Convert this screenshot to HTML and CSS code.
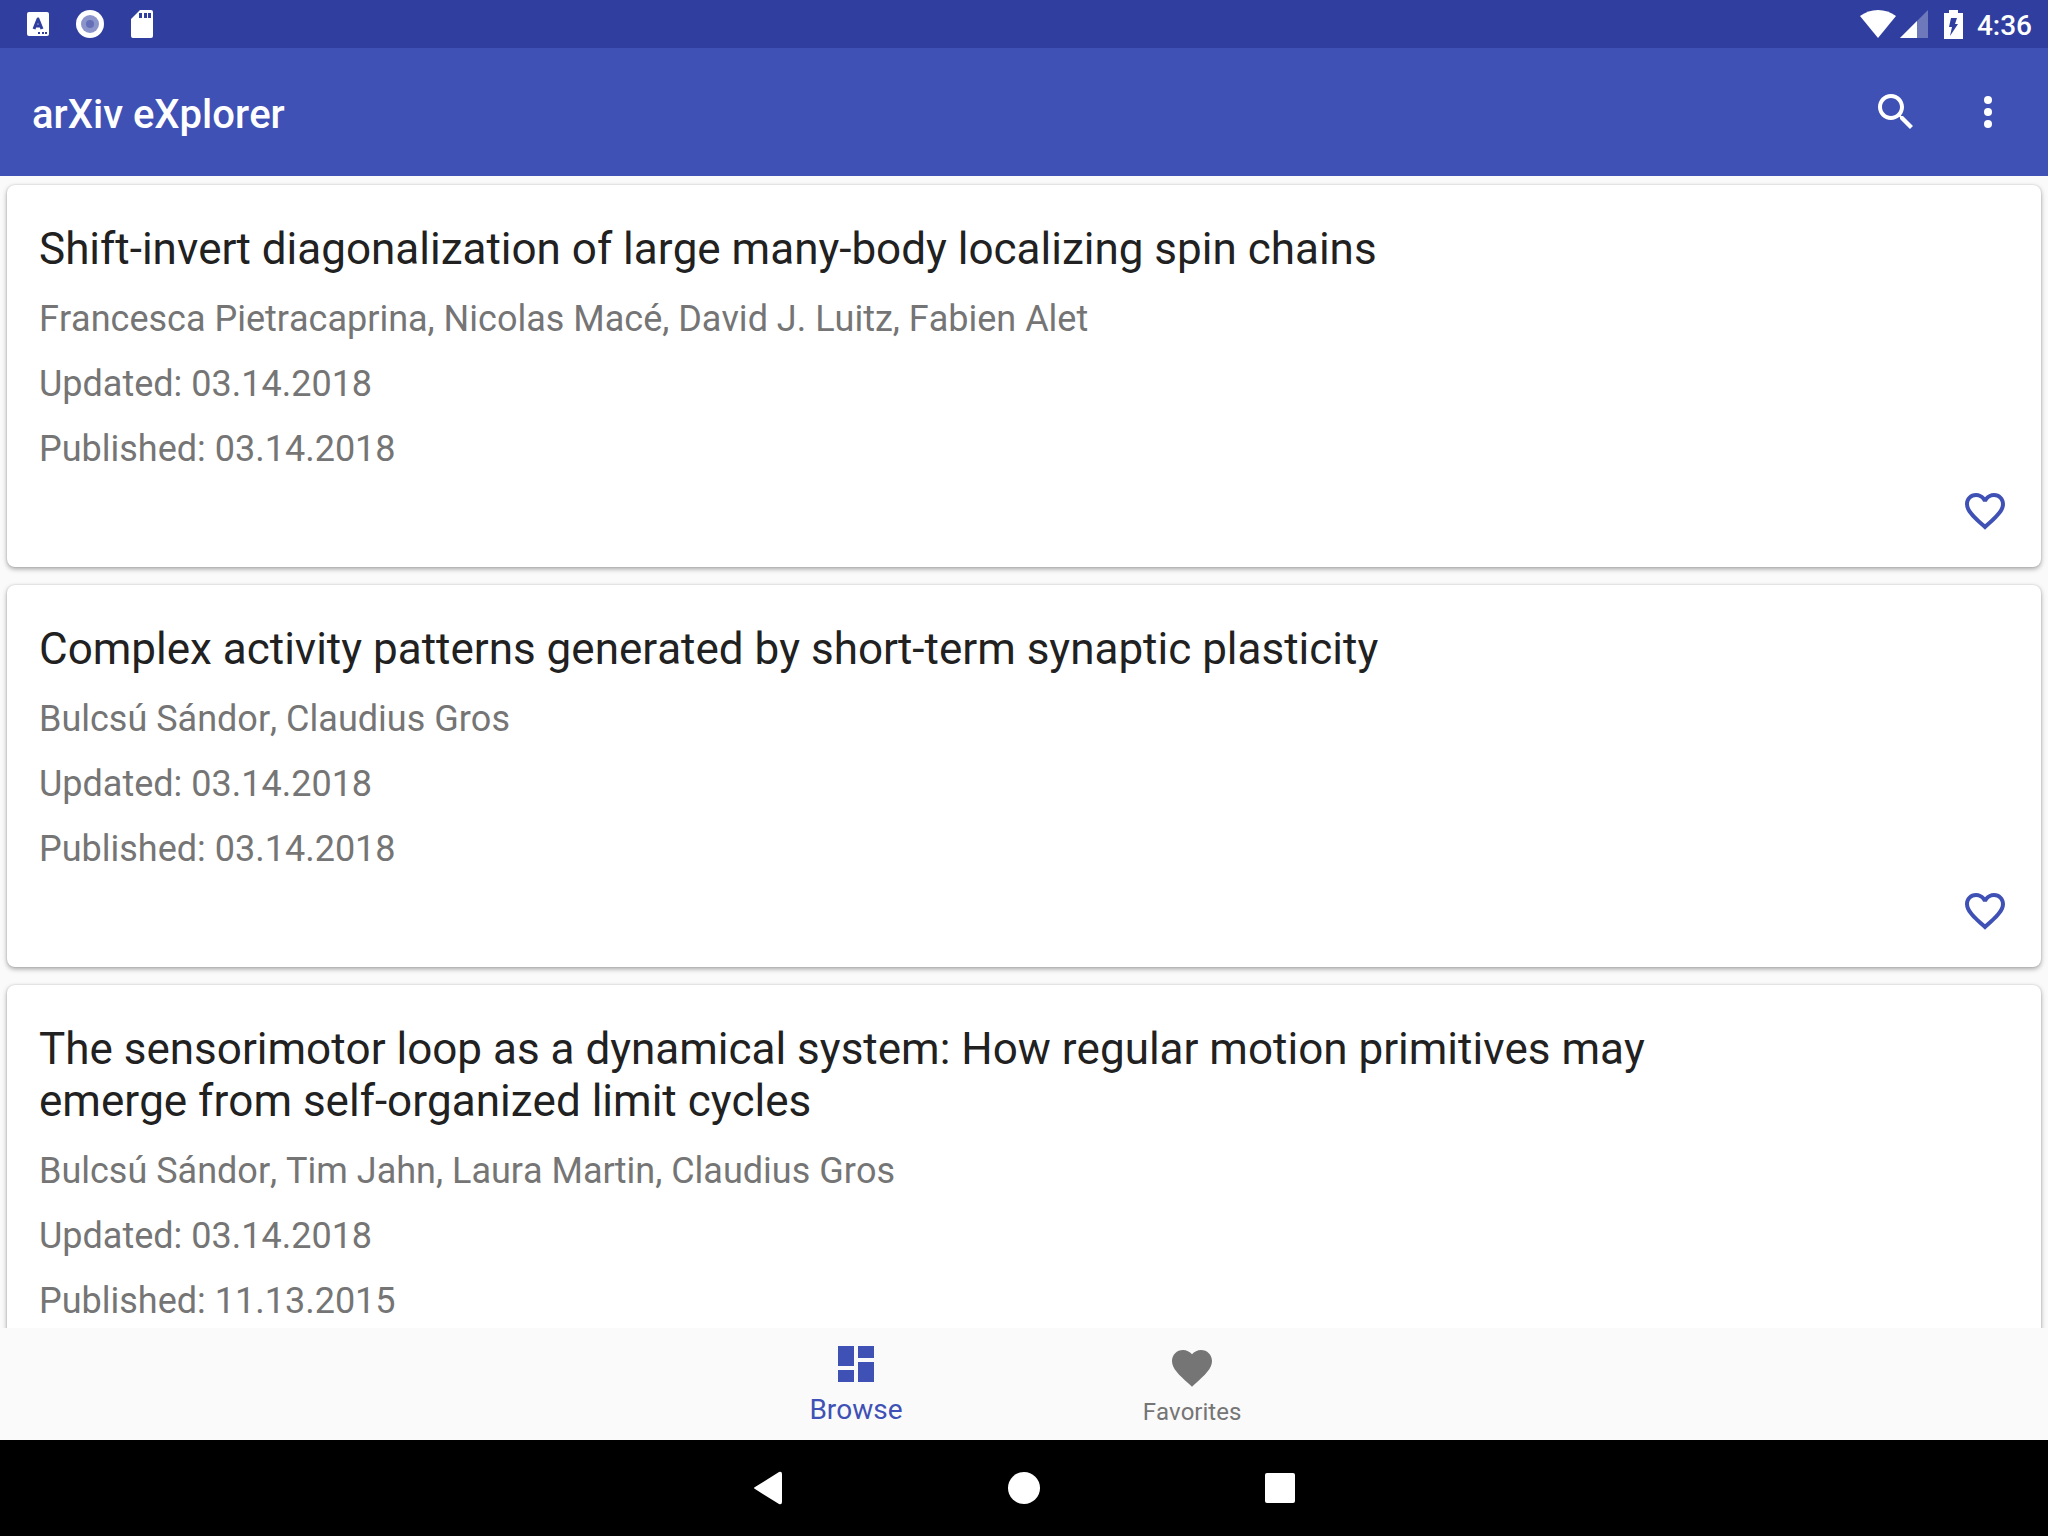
FILE: index.html
```html
<!DOCTYPE html>
<html lang="en">
<head>
<meta charset="utf-8">
<meta name="viewport" content="width=device-width, initial-scale=1">
<title>arXiv eXplorer</title>
<link rel="stylesheet" href="styles.css">
</head>
<body>
<div class="status-bar">
  <div class="notifications">
    <svg class="status-icon" viewBox="0 0 48 48" aria-hidden="true"><path fill="#fff" d="M15 12h18q2 0 2 2v20q0 2-2 2H15q-2 0-2-2V14q0-2 2-2z"/><path fill="none" stroke="#303f9f" stroke-width="3" stroke-linejoin="round" d="M20 29l4-10 4 10M21 26h6"/><path fill="#303f9f" d="M24 32h2v2h-2zM28 32h2v2h-2zM31 32h2v2h-2z"/></svg>
    <svg class="status-icon" viewBox="0 0 48 48" aria-hidden="true"><circle cx="24" cy="24" r="14" fill="#fff"/><circle cx="24" cy="24" r="9" fill="#8b94cb"/><circle cx="24" cy="24" r="4" fill="#646fb8"/></svg>
    <svg class="status-icon" viewBox="0 0 48 48" aria-hidden="true"><path fill="#fff" fill-rule="evenodd" d="M22 10h11q2 0 2 2v24q0 2-2 2H15q-2 0-2-2V19zM21 13v5h3v-5zM26 13v5h3v-5zM30 13v5h3v-5z"/></svg>
  </div>
  <div class="system">
    <svg class="wifi" viewBox="0 0 36 28" aria-hidden="true"><path fill="#fff" d="M18 28L0 6Q8 0 18 0T36 6z"/></svg>
    <svg class="signal" viewBox="0 0 28 28" aria-hidden="true"><path fill="#fff" fill-opacity=".3" d="M28 0v28H0z"/><path fill="#fff" d="M17 11v17H0z"/></svg>
    <svg class="battery" viewBox="0 0 20 29" aria-hidden="true"><path fill="#fff" fill-rule="evenodd" d="M5 0h9v3h5v26H0V3h5zM13 8H7L5 17h3L6 26l8-12h-3z"/></svg>
    <time class="clock">4:36</time>
  </div>
</div>

<header class="toolbar">
  <h1 class="app-title">arXiv eXplorer</h1>
  <button class="icon-button" type="button" aria-label="Search"><svg class="icon" viewBox="0 0 24 24"><path d="M15.500 14h-.79l-.28-.27C15.410 12.590 16 11.110 16 9.500 16 5.910 13.090 3 9.500 3S3 5.910 3 9.500 5.910 16 9.500 16c1.610 0 3.090-.59 4.230-1.570l.27.28v.79l5 4.990L20.490 19l-4.990-5zm-6 0C7.010 14 5 11.990 5 9.500S7.010 5 9.500 5 14 7.010 14 9.500 11.990 14 9.500 14z"/></svg></button>
  <button class="icon-button" type="button" aria-label="More options"><svg class="icon" viewBox="0 0 24 24"><circle cx="12" cy="6" r="2"/><circle cx="12" cy="12" r="2"/><circle cx="12" cy="18" r="2"/></svg></button>
</header>

<main class="papers">
  <article class="card">
    <h2 class="paper-title">Shift-invert diagonalization of large many-body localizing spin chains</h2>
    <p class="meta">Francesca Pietracaprina, Nicolas Macé, David J. Luitz, Fabien Alet</p>
    <p class="meta">Updated: 03.14.2018</p>
    <p class="meta">Published: 03.14.2018</p>
    <button class="favorite" type="button" aria-label="Add to favorites"><svg class="icon" viewBox="0 0 24 24"><path d="M16.500 3c-1.740 0-3.410.81-4.500 2.090C10.910 3.810 9.240 3 7.500 3 4.420 3 2 5.420 2 8.500c0 3.780 3.400 6.860 8.550 11.540L12 21.350l1.450-1.320C18.600 15.360 22 12.280 22 8.500 22 5.420 19.580 3 16.500 3zm-4.400 15.550l-.1.1-.1-.1C7.140 14.240 4 11.390 4 8.500 4 6.500 5.500 5 7.500 5c1.540 0 3.040.99 3.570 2.360h1.870C13.460 5.990 14.960 5 16.500 5c2 0 3.500 1.500 3.500 3.500 0 2.890-3.140 5.740-7.900 10.050z"/></svg></button>
  </article>
  <article class="card">
    <h2 class="paper-title">Complex activity patterns generated by short-term synaptic plasticity</h2>
    <p class="meta">Bulcsú Sándor, Claudius Gros</p>
    <p class="meta">Updated: 03.14.2018</p>
    <p class="meta">Published: 03.14.2018</p>
    <button class="favorite" type="button" aria-label="Add to favorites"><svg class="icon" viewBox="0 0 24 24"><path d="M16.500 3c-1.740 0-3.410.81-4.500 2.090C10.910 3.810 9.240 3 7.500 3 4.420 3 2 5.420 2 8.500c0 3.780 3.400 6.860 8.550 11.540L12 21.350l1.450-1.320C18.600 15.360 22 12.280 22 8.500 22 5.420 19.580 3 16.500 3zm-4.400 15.550l-.1.1-.1-.1C7.140 14.240 4 11.390 4 8.500 4 6.500 5.500 5 7.500 5c1.540 0 3.040.99 3.570 2.360h1.870C13.460 5.990 14.960 5 16.500 5c2 0 3.500 1.500 3.500 3.500 0 2.890-3.140 5.740-7.900 10.050z"/></svg></button>
  </article>
  <article class="card">
    <h2 class="paper-title">The sensorimotor loop as a dynamical system: How regular motion primitives may emerge from self-organized limit cycles</h2>
    <p class="meta">Bulcsú Sándor, Tim Jahn, Laura Martin, Claudius Gros</p>
    <p class="meta">Updated: 03.14.2018</p>
    <p class="meta">Published: 11.13.2015</p>
  </article>
</main>

<nav class="tabs" aria-label="Sections">
  <a class="tab tab-active" href="#browse" aria-current="page"><svg class="icon" viewBox="0 0 24 24" aria-hidden="true"><path d="M3 13h8V3H3v10zm0 8h8v-6H3v6zm10 0h8V11h-8v10zm0-18v6h8V3h-8z"/></svg><span>Browse</span></a>
  <a class="tab" href="#favorites"><svg class="icon" viewBox="0 0 24 24" aria-hidden="true"><path d="M12 21.350l-1.450-1.320C5.400 15.360 2 12.280 2 8.500 2 5.420 4.420 3 7.500 3c1.740 0 3.410.81 4.500 2.090C13.090 3.810 14.760 3 16.500 3 19.580 3 22 5.420 22 8.500c0 3.780-3.400 6.860-8.550 11.540L12 21.350z"/></svg><span>Favorites</span></a>
</nav>

<div class="system-nav">
  <button class="system-button" type="button" aria-label="Back"><svg class="icon" viewBox="0 0 48 48"><path d="M38 10v28q0 3-3 2L11 25q-2-1 0-2L35 8q3-1 3 2z"/></svg></button>
  <button class="system-button" type="button" aria-label="Home"><svg class="icon" viewBox="0 0 48 48"><circle cx="24" cy="24" r="16"/></svg></button>
  <button class="system-button" type="button" aria-label="Overview"><svg class="icon" viewBox="0 0 48 48"><rect x="9" y="9" width="30" height="30" rx="2"/></svg></button>
</div>
</body>
</html>
```
FILE: styles.css
```css
* {
  box-sizing: border-box;
}

body {
  margin: 0;
  height: 100vh;
  display: flex;
  flex-direction: column;
  overflow: hidden;
  background: #fafafa;
  color: #212121;
  font-family: Roboto, "Noto Sans", sans-serif;
  font-kerning: none;
}

button {
  margin: 0;
  padding: 0;
  border: 0;
  background: none;
  color: inherit;
  font: inherit;
}

svg {
  display: block;
}

.icon {
  width: 48px;
  height: 48px;
  fill: currentColor;
}

/* Status bar */
.status-bar {
  flex: none;
  height: 48px;
  padding: 0 16px 0 14px;
  display: flex;
  justify-content: space-between;
  background: #303f9f;
  color: #fff;
}

.notifications {
  display: flex;
  gap: 4px;
}

.status-icon {
  width: 48px;
  height: 48px;
}

.system {
  display: flex;
  align-items: center;
}

.wifi {
  width: 36px;
  height: 28px;
  margin-right: 4px;
}

.signal {
  width: 28px;
  height: 28px;
  margin-right: 16px;
}

.battery {
  width: 20px;
  height: 29px;
  margin-right: 13px;
}

.clock {
  padding-top: 3px;
  font-size: 28px;
  line-height: 45px;
  font-weight: 500;
}

/* App toolbar */
.toolbar {
  flex: none;
  height: 128px;
  padding: 0 14px 0 32px;
  display: flex;
  align-items: center;
  background: #3f51b5;
  color: #fff;
}

.app-title {
  flex: 1;
  margin: 0;
  padding-top: 5px;
  font-size: 40px;
  line-height: 48px;
  font-weight: 500;
}

.icon-button {
  width: 92px;
  height: 96px;
  display: grid;
  place-items: center;
}

/* Paper list */
.papers {
  flex: 1;
  min-height: 0;
  overflow: hidden;
  padding: 9px 7px 0;
  display: flex;
  flex-direction: column;
  gap: 18px;
}

.card {
  flex: none;
  padding: 38px 32px 32px;
  display: flex;
  flex-direction: column;
  align-items: flex-start;
  border-radius: 8px;
  background: #fff;
  box-shadow: 0 0 2px rgba(0, 0, 0, .14), 0 2px 5px rgba(0, 0, 0, .34);
}

.paper-title {
  max-width: 88%;
  margin: 0 0 23px;
  font-size: 44px;
  line-height: 52px;
  font-weight: 400;
}

.meta {
  margin: 0 0 23px;
  color: #757575;
  font-size: 36px;
  line-height: 42px;
}

.favorite {
  align-self: flex-end;
  margin-top: -6px;
  color: #3f51b5;
}

/* Bottom tabs */
.tabs {
  flex: none;
  height: 112px;
  display: flex;
  justify-content: center;
  background: #fafafa;
}

.tab {
  width: 336px;
  padding-bottom: 14px;
  display: flex;
  flex-direction: column;
  align-items: center;
  justify-content: flex-end;
  gap: 6px;
  color: #757575;
  font-size: 24px;
  line-height: 28px;
  text-decoration: none;
}

.tab-active {
  color: #3f51b5;
  font-size: 28px;
  line-height: 32px;
}

/* System navigation */
.system-nav {
  flex: none;
  height: 96px;
  display: flex;
  justify-content: center;
  background: #000;
  color: #fff;
}

.system-button {
  width: 256px;
  display: grid;
  place-items: center;
}
```
